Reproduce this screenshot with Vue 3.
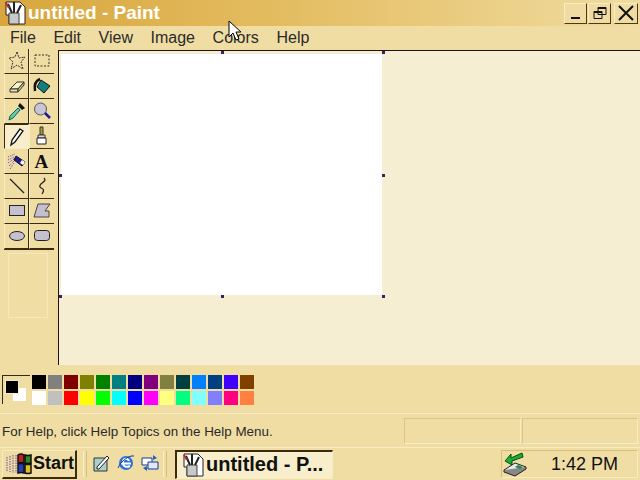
<script setup>
const tools = ['select', 'rect', 'eraser', 'fill', 'picker', 'zoom', 'pencil', 'brush', 'spray', 'text', 'line', 'curve', 'box', 'poly', 'ellipse', 'round']
const menus = ['File', 'Edit', 'View', 'Image', 'Colors', 'Help']
const colors = [
  '#000000', '#808080', '#800000', '#808000', '#008000', '#008080', '#000080', '#800080', '#808040', '#004040', '#0080ff', '#004080', '#4000ff', '#804000',
  '#ffffff', '#c0c0c0', '#ff0000', '#ffff00', '#00ff00', '#00ffff', '#0000ff', '#ff00ff', '#ffff80', '#00ff80', '#80ffff', '#8080ff', '#ff0080', '#ff8040',
]
const handles = [
  { x: 221, y: 1 }, { x: 382, y: 1 },
  { x: 59, y: 124 }, { x: 382, y: 124 },
  { x: 59, y: 245 }, { x: 221, y: 245 }, { x: 382, y: 245 },
]
</script>

<template>
  <div class="win">
    <header class="title">
      <svg class="app-icon" width="24" height="24" viewBox="0 0 24 24">
        <path d="M4 1h14l5 5v17H7V14H4z" fill="#fff" stroke="#222" />
        <path d="M7 12h10v11H7z" fill="#c8c8c8" stroke="#444" />
        <path d="M6 3l4 9M12 1v11M19 4l-4 8" stroke="#222" stroke-width="2" />
        <path d="M4 2l3 5" stroke="#b03030" stroke-width="2" />
      </svg>
      <span class="title-text">untitled - Paint</span>
      <div class="win-btns">
        <button class="wb"><svg width="16" height="14" viewBox="0 0 16 14"><path d="M3 12h9" stroke="#111" stroke-width="2" /></svg></button>
        <button class="wb"><svg width="16" height="14" viewBox="0 0 16 14"><path d="M6 1.500h8v7H6zM2 5.500h8v7H2z" fill="none" stroke="#111" /><path d="M6 2h8M2 6h8" stroke="#111" stroke-width="2" /></svg></button>
        <button class="wb wb-x"><svg width="16" height="16" viewBox="0 0 16 16"><path d="M1 1l14 14M15 1L1 15" stroke="#111" stroke-width="2" /></svg></button>
      </div>
    </header>

    <nav class="menu">
      <span v-for="m in menus" :key="m">{{ m }}</span>
    </nav>

    <main class="main">
      <aside class="toolbox">
        <div class="tools">
          <div v-for="t in tools" :key="t" class="tool" :class="{ on: t === 'pencil' }">
            <svg width="20" height="20" viewBox="0 0 20 20">
              <path v-if="t === 'select'" d="M10 1l2 6 6-1-4 5 2 7-6-4-6 4 2-7-4-4 6-1z" fill="none" stroke="#333" stroke-dasharray="2 1" />
              <rect v-else-if="t === 'rect'" x="3" y="4" width="14" height="11" fill="none" stroke="#333" stroke-dasharray="2 1.500" />
              <template v-else-if="t === 'eraser'">
                <path d="M3 13l7-7h7l-6 7z" fill="#f8f4c0" stroke="#333" />
                <path d="M3 13h8v3H3z" fill="#e8e0b0" stroke="#333" />
                <path d="M11 13l6-7v3l-6 7z" fill="#cfc9a0" stroke="#333" />
              </template>
              <template v-else-if="t === 'fill'">
                <path d="M9 4l9 6-6 7-7-6z" fill="#0f7f7f" stroke="#111" />
                <path d="M8 3C3 5 2 9 3 15" fill="none" stroke="#111" stroke-width="2.500" />
              </template>
              <template v-else-if="t === 'picker'">
                <path d="M13 2l5 5-3 2-4-4z" fill="#111" />
                <path d="M11 7l2 2-7 8-4 2 1-4z" fill="#5fd0b0" stroke="#0b5a4a" />
              </template>
              <template v-else-if="t === 'zoom'">
                <circle cx="8.500" cy="8" r="6" fill="#c9c5d8" stroke="#555" />
                <path d="M13 12l5 5" stroke="#1a1a9a" stroke-width="2.500" />
              </template>
              <template v-else-if="t === 'pencil'">
                <path d="M13 2l3 2-8 11-4 3 1-5z" fill="#fff" stroke="#111" stroke-width="1.300" />
              </template>
              <template v-else-if="t === 'brush'">
                <path d="M8 1h3v8H8z" fill="#a8a030" stroke="#333" />
                <path d="M6 9h7v3H6z" fill="#ddd" stroke="#333" />
                <path d="M5 12h9v6H5z" fill="#fff" stroke="#222" />
              </template>
              <template v-else-if="t === 'spray'">
                <path d="M1 6l7-3M1 9l6-3M1 12l6-4M2 15l5-5M3 18l4-6" stroke="#5a3fc0" stroke-dasharray="1 1" />
                <path d="M9 5l9 6-3 4-8-6z" fill="#1a1a9a" stroke="#111" />
                <path d="M15 9l3 2-2 3-3-2z" fill="#fff" />
              </template>
              <text v-else-if="t === 'text'" x="2.500" y="17" class="tool-a">A</text>
              <path v-else-if="t === 'line'" d="M3 3l14 14" stroke="#222" stroke-width="1.300" />
              <path v-else-if="t === 'curve'" d="M12 2c4 4-6 5-4 9 1 2 6 1 2 7" fill="none" stroke="#222" stroke-width="1.300" />
              <rect v-else-if="t === 'box'" x="2.500" y="4.500" width="15" height="10" fill="#c4c0d0" stroke="#222" />
              <path v-else-if="t === 'poly'" d="M6 3h12l-5 7h4v6H2z" fill="#c4c0d0" stroke="#444" />
              <ellipse v-else-if="t === 'ellipse'" cx="10" cy="10" rx="7.500" ry="4.500" fill="#c4c0d0" stroke="#222" />
              <rect v-else x="2.500" y="4.500" width="15" height="10" rx="3" fill="#c4c0d0" stroke="#222" />
            </svg>
          </div>
        </div>
        <div class="tool-opts"></div>
      </aside>

      <section class="canvas-wrap">
        <div class="sheet"></div>
      </section>

      <i v-for="(h, i) in handles" :key="i" class="handle" :style="{ left: h.x + 'px', top: h.y + 'px' }"></i>
    </main>

    <section class="palette">
      <div class="current">
        <i class="cur-back"></i>
        <i class="cur-front"></i>
      </div>
      <div class="swatches">
        <i v-for="(c, i) in colors" :key="i" class="swatch" :style="{ background: c }"></i>
      </div>
    </section>

    <footer class="status">
      <div class="st st-main">For Help, click Help Topics on the Help Menu.</div>
      <div class="st st-a"></div>
      <div class="st st-b"></div>
    </footer>

    <div class="taskbar">
      <button class="start">
        <svg width="27" height="24" viewBox="0 0 27 24">
          <path d="M1 5v14M4 4v16M7 3v18M10 3v18" stroke="#6a4a9a" stroke-dasharray="1.500 1" />
          <path d="M12 3q3-2 6 0v8q-3-1-6 0z" fill="#c02020" stroke="#111" stroke-width="1.500" />
          <path d="M19 3q3 1 6 0v8q-3 1-6 0z" fill="#2a8a2a" stroke="#111" stroke-width="1.500" />
          <path d="M12 12q3-1 6 0v9q-3-1-6 0z" fill="#2040c0" stroke="#111" stroke-width="1.500" />
          <path d="M19 12q3 1 6 0v9q-3 1-6 0z" fill="#e0c020" stroke="#111" stroke-width="1.500" />
        </svg>
        <span>Start</span>
      </button>
      <i class="sep"></i>
      <div class="quick">
        <svg width="18" height="18" viewBox="0 0 18 18">
          <path d="M1 4h13v13H1z" fill="#a8d0c8" stroke="#333" />
          <path d="M4 13l10-11 2 2L6 15H4z" fill="#fff" stroke="#222" />
        </svg>
        <svg width="18" height="18" viewBox="0 0 18 18">
          <circle cx="9" cy="9" r="7" fill="#2a72d8" />
          <path d="M4 9.500h10M12 7a3 3 0 0 0-6 2c0 3 3 5 7 3" fill="none" stroke="#fff" stroke-width="2" />
          <path d="M1 14C4 7 12 1 17 2" fill="none" stroke="#123a90" />
        </svg>
        <svg width="18" height="18" viewBox="0 0 18 18">
          <path d="M1 4h10v7H1z" fill="#fff" stroke="#123a90" />
          <path d="M7 8h10v7H7z" fill="#dfe8ff" stroke="#123a90" />
          <path d="M12 1l4 3-4 2zM6 17l-4-3 4-2z" fill="#1f5fd0" />
        </svg>
      </div>
      <i class="sep sep-2"></i>
      <button class="task">
        <svg width="24" height="24" viewBox="0 0 24 24">
          <path d="M4 1h14l5 5v17H7V14H4z" fill="#fff" stroke="#222" />
          <path d="M7 12h10v11H7z" fill="#c8c8c8" stroke="#444" />
          <path d="M6 3l4 9M12 1v11M19 4l-4 8" stroke="#222" stroke-width="2" />
          <path d="M4 2l3 5" stroke="#b03030" stroke-width="2" />
        </svg>
        <span>untitled - P...</span>
      </button>
      <div class="tray">
        <svg width="26" height="26" viewBox="0 0 26 26">
          <path d="M19 2L8 7V3L2 10l7 4v-4l11-4z" fill="#18b030" stroke="#0a4a14" />
          <path d="M1 19l11-7 11 4-11 7z" fill="#e8e8e8" stroke="#222" />
          <path d="M1 19v2l11 4 11-7v-2" fill="#888" stroke="#222" />
          <path d="M15 14l5 2-3 2-5-2z" fill="#2a8a4a" />
        </svg>
        <span class="clock">1:42 PM</span>
      </div>
    </div>

    <svg class="cursor" width="14" height="22" viewBox="0 0 14 22">
      <path d="M1 1v16l4-4 3 7 3-1-3-7h5z" fill="#fff" stroke="#000" />
    </svg>
  </div>
</template>

<style>
html, body { margin: 0; overflow: hidden; }
</style>

<style scoped>
.win {
  position: relative;
  width: 640px;
  height: 480px;
  display: flex;
  flex-direction: column;
  overflow: hidden;
  background: #f0dda4;
  font-family: "Liberation Sans", Arial, sans-serif;
  color: #111;
}

.title {
  height: 26px;
  flex: none;
  display: flex;
  align-items: center;
  padding: 0 2px;
  box-sizing: border-box;
  background: linear-gradient(90deg, #d8a63c 0%, #e4bd62 45%, #f0dca0 100%);
}

.app-icon { flex: none; }

.title-text {
  margin-left: 2px;
  color: #fff;
  font-size: 19px;
  font-weight: bold;
}

.win-btns {
  margin-left: auto;
  display: flex;
  gap: 1px;
}

.wb {
  width: 23px;
  height: 21px;
  padding: 0;
  margin: 0;
  display: flex;
  align-items: center;
  justify-content: center;
  border: 1px solid #f8ecc4;
  border-right-color: #4a3a18;
  border-bottom-color: #4a3a18;
  background: #f0dca2;
}

.wb-x { margin-left: 2px; width: 24px; }

.menu {
  height: 24px;
  flex: none;
  display: flex;
  align-items: center;
  gap: 17.600px;
  padding-left: 10px;
  font-size: 16px;
  color: #2a2a2a;
  background: #f0dda4;
  box-sizing: border-box;
}

.main {
  position: relative;
  height: 315px;
  flex: none;
  display: flex;
}

.toolbox {
  width: 58px;
  flex: none;
  box-sizing: border-box;
  padding-left: 4px;
  display: flex;
  flex-direction: column;
  background: #f0dda4;
}

.tools {
  display: grid;
  grid-template-columns: repeat(2, 25px);
  grid-auto-rows: 25px;
  width: 50px;
  margin-top: -1px;
  border-bottom: 1px solid #3a2a10;
}

.tool {
  display: flex;
  align-items: center;
  justify-content: center;
  box-sizing: border-box;
  border-left: 1px solid #f8ecc4;
  border-right: 1px solid #3a2a10;
  border-bottom: 1px solid #3a2a10;
  background: #f0dda4;
}

.tool:nth-child(even) { border-right: none; }

.tool.on {
  background: #f8eecb;
  border-top: 1px solid #3a2a10;
  border-left: 1px solid #3a2a10;
  border-right-color: #f8ecc4;
  border-bottom-color: #f8ecc4;
}

.tool-a {
  font-family: "Liberation Serif", serif;
  font-weight: bold;
  font-size: 19px;
  fill: #111;
}

.tool-opts {
  width: 38px;
  height: 63px;
  margin: 3px 0 0 4px;
  border: 1px solid #f6e8b8;
  background: #efdda4;
}

.canvas-wrap {
  flex: 1;
  box-sizing: border-box;
  padding: 3px 0 0 2px;
  border-left: 1px solid #1e1408;
  border-top: 1px solid #1e1408;
  background: #f6eed2;
  position: relative;
}

.sheet {
  width: 321px;
  height: 241px;
  background: #fff;
}

.handle {
  position: absolute;
  width: 3px;
  height: 3px;
  background: #3a1f6a;
}

.palette {
  height: 49px;
  flex: none;
  display: flex;
  box-sizing: border-box;
  padding: 10px 0 0 2px;
  gap: 2px;
  background: #f0dda4;
  border-bottom: 1px solid #f8ecc4;
}

.current {
  position: relative;
  width: 28px;
  height: 29px;
  box-sizing: border-box;
  border-top: 1px solid #3a2a10;
  border-left: 1px solid #3a2a10;
  background: #f0dda4;
}

.cur-back {
  position: absolute;
  left: 10px;
  top: 12px;
  width: 13px;
  height: 13px;
  background: #fff;
}

.cur-front {
  position: absolute;
  left: 2px;
  top: 4px;
  width: 12px;
  height: 12px;
  background: #000;
  border: 1px solid #f8ecc4;
}

.swatches {
  display: grid;
  grid-template-columns: repeat(14, 14px);
  grid-auto-rows: 14px;
  gap: 2px;
}

.swatch {
  display: block;
}

.status {
  height: 33px;
  flex: none;
  display: flex;
  box-sizing: border-box;
  padding: 4px 2px 3px;
  gap: 1px;
  background: #f0dda4;
}

.st {
  box-sizing: border-box;
  border: 1px solid #f8ecc4;
  border-top-color: #dcc584;
  border-left-color: #dcc584;
  font-size: 13.400px;
  line-height: 28px;
  white-space: nowrap;
  color: #2a2a2a;
}

.st-main { width: 401px; border: none; }
.st-a { width: 117px; }
.st-b { width: 116px; }

.taskbar {
  flex: 1;
  display: flex;
  align-items: center;
  box-sizing: border-box;
  padding: 0 2px;
  background: #f0dda4;
  border-top: 1px solid #f8ecc4;
}

.start {
  width: 75px;
  height: 29px;
  padding: 0 0 0 3px;
  display: flex;
  align-items: center;
  box-sizing: border-box;
  border: 1px solid #f8ecc4;
  border-right: 2px solid #3a2a10;
  border-bottom: 2px solid #3a2a10;
  background: #f0dda4;
  font-family: inherit;
  font-size: 18px;
  font-weight: bold;
  color: #111;
}

.sep {
  width: 2px;
  height: 26px;
  margin-left: 6px;
  border-left: 1px solid #f8ecc4;
  border-right: 1px solid #d6bd7a;
}

.sep-2 { margin-left: 4px; }

.quick {
  display: flex;
  gap: 6px;
  margin-left: 6px;
  padding-bottom: 3px;
}

.task {
  width: 158px;
  height: 29px;
  margin-left: 8px;
  padding: 0 0 0 3px;
  display: flex;
  align-items: center;
  gap: 2px;
  box-sizing: border-box;
  border: 2px solid #3a2a10;
  border-right: 1px solid #f8ecc4;
  border-bottom: 1px solid #f8ecc4;
  background: #f8eecb;
  font-family: inherit;
  font-size: 20px;
  font-weight: bold;
  color: #111;
  white-space: nowrap;
}

.tray {
  margin-left: auto;
  width: 137px;
  height: 28px;
  display: flex;
  align-items: center;
  box-sizing: border-box;
  padding-left: 1px;
  border: 1px solid #f8ecc4;
  border-top-color: #d6bd7a;
  border-left-color: #d6bd7a;
}

.clock {
  margin-left: 22px;
  font-size: 18px;
  color: #111;
}

.cursor {
  position: absolute;
  left: 228px;
  top: 20px;
}
</style>
